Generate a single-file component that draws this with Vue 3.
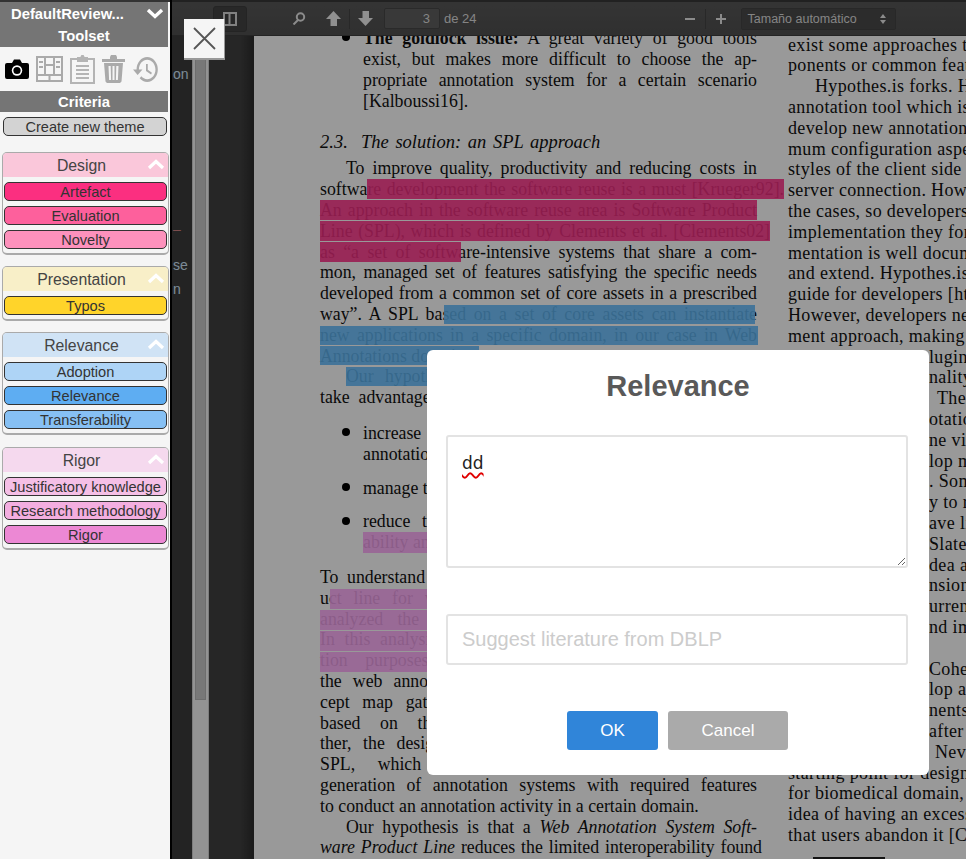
<script setup>
import { ref } from 'vue'

const comment = ref('dd')
const literature = ref('')

const groups = [
  {
    name: 'Design',
    head: '#fac7da',
    items: [
      { name: 'Artefact', color: '#fb2f80' },
      { name: 'Evaluation', color: '#fd609c' },
      { name: 'Novelty', color: '#fd91bc' }
    ]
  },
  {
    name: 'Presentation',
    head: '#f8efc8',
    items: [{ name: 'Typos', color: '#ffd42a' }]
  },
  {
    name: 'Relevance',
    head: '#d0e3f5',
    items: [
      { name: 'Adoption', color: '#aed4f6' },
      { name: 'Relevance', color: '#5eadf2' },
      { name: 'Transferability', color: '#86c0f4' }
    ]
  },
  {
    name: 'Rigor',
    head: '#f5d9ee',
    items: [
      { name: 'Justificatory knowledge', color: '#f5bfe6' },
      { name: 'Research methodology', color: '#f3aee0' },
      { name: 'Rigor', color: '#ec88d4' }
    ]
  }
]

const crimson = 'rgba(255, 50, 136, 0.9)'
const blue = 'rgba(100, 190, 255, 0.9)'
const purple = 'rgba(255, 168, 250, 0.9)'

// annotations sit on top of the pdf text, coordinates relative to the page
const highlights = [
  { x: 113, y: 143, w: 417, h: 20, c: crimson },
  { x: 66, y: 164, w: 437, h: 20, c: crimson },
  { x: 66, y: 185, w: 450, h: 20, c: crimson },
  { x: 66, y: 206, w: 141, h: 20, c: crimson },
  { x: 190, y: 269, w: 311, h: 19, c: blue },
  { x: 66, y: 290, w: 438, h: 19, c: blue },
  { x: 66, y: 310, w: 159, h: 19, c: blue },
  { x: 92, y: 331, w: 100, h: 19, c: blue },
  { x: 109, y: 496, w: 80, h: 21, c: purple },
  { x: 76, y: 553, w: 120, h: 20, c: purple },
  { x: 66, y: 574, w: 130, h: 20, c: purple },
  { x: 66, y: 595, w: 130, h: 20, c: purple },
  { x: 66, y: 616, w: 130, h: 20, c: purple }
]

function rectStyle(h) {
  return {
    left: h.x + 'px',
    top: h.y + 'px',
    width: h.w + 'px',
    height: h.h + 'px',
    background: h.c
  }
}
</script>

<template>
  <div class="app">
    <aside class="sidebar">
      <div class="side-head">
        <div class="mode-row">
          <span class="mode-name">DefaultReview...</span>
          <svg class="chev" width="18" height="11" viewBox="0 0 18 11">
            <polyline points="2,2 9,8.5 16,2" fill="none" stroke="#fff" stroke-width="3.4" />
          </svg>
        </div>
        <div class="bar-title">Toolset</div>
      </div>
      <div class="tools">
        <svg width="24" height="20" viewBox="0 0 24 20">
          <path d="M2 4h5l2-3.5h6L17 4h5a2 2 0 0 1 2 2v12a2 2 0 0 1-2 2H2a2 2 0 0 1-2-2V6a2 2 0 0 1 2-2z" fill="#000" />
          <circle cx="12" cy="11.5" r="5.2" fill="#fff" />
          <circle cx="12" cy="11.5" r="3.6" fill="#000" />
        </svg>
        <svg width="27" height="26" viewBox="0 0 27 26" fill="none" stroke="#aaa" stroke-width="2">
          <rect x="1" y="1" width="25" height="24" />
          <path d="M1 19h25M9 1v18M18 1v18M13.5 19v6M9 9h9M3 6h4M3 11h4M20 6h4M20 11h4" />
        </svg>
        <svg width="25" height="29" viewBox="0 0 25 29" fill="none" stroke="#b4b4b4" stroke-width="2">
          <path d="M8 4H1v24h23V4h-7" />
          <path d="M8 6V3h3l1-2h1l1 2h3v3z" fill="#b4b4b4" />
          <path d="M6 11h13M6 15h13M6 19h13M6 23h13" />
        </svg>
        <svg width="23" height="28" viewBox="0 0 23 28" fill="#aaa">
          <path d="M0 4h8V2l1-2h5l1 2v2h8v3H0z" />
          <path d="M2 8h19l-1.500 18.500L18 28H5l-1.500-1.500zM6.500 11l.6 14h2l-.4-14zM10.500 11v14h2V11zM14.300 11l-.4 14h2l.6-14z" fill-rule="evenodd" />
        </svg>
        <svg class="history" width="26" height="25" viewBox="1 3 22 18" preserveAspectRatio="none" fill="#aaa">
          <path d="M13 3a9 9 0 0 0-9 9H1l3.890 3.890.070.140L9 12H6c0-3.870 3.130-7 7-7s7 3.130 7 7-3.130 7-7 7c-1.930 0-3.680-.790-4.940-2.060l-1.420 1.420A8.954 8.954 0 0 0 13 21a9 9 0 0 0 0-18zm-1 5v5l4.280 2.540.720-1.210-3.500-2.080V8H12z" />
        </svg>
      </div>
      <div class="bar-title criteria">Criteria</div>
      <button class="theme-btn new-theme">Create new theme</button>
      <section v-for="g in groups" :key="g.name" class="group">
        <header class="group-head" :style="{ background: g.head }">
          <span>{{ g.name }}</span>
          <svg class="group-chev" width="18" height="11" viewBox="0 0 18 11">
            <polyline points="2,9 9,2.500 16,9" fill="none" stroke="#fff" stroke-width="3.2" />
          </svg>
        </header>
        <button
          v-for="item in g.items"
          :key="item.name"
          class="theme-btn"
          :style="{ background: item.color }"
        >
          {{ item.name }}
        </button>
      </section>
    </aside>

    <div class="viewer">
      <div class="toolbar">
        <span class="tb-toggle">
          <svg width="14" height="14" viewBox="0 0 14 14" fill="none" stroke="#d8d8d8" stroke-width="2">
            <rect x="1" y="1" width="12" height="12" />
            <path d="M6.500 1v12" />
          </svg>
        </span>
        <svg class="tb-search" width="14" height="13" viewBox="0 0 14 13" fill="none" stroke="#e8e8e8" stroke-width="2">
          <circle cx="8.500" cy="5" r="3.700" />
          <path d="M6 8l-4.500 4.500" />
        </svg>
        <svg class="tb-up" width="15" height="15" viewBox="0 0 15 15" fill="#f0f0f0">
          <path d="M7.500 0L15 8h-4v7H4.500V8H0z" />
        </svg>
        <span class="tb-sep"></span>
        <svg class="tb-down" width="15" height="15" viewBox="0 0 15 15" fill="#f0f0f0">
          <path d="M7.500 15L15 7h-4V0H4.500v7H0z" />
        </svg>
        <span class="tb-page">3</span>
        <span class="tb-of">de 24</span>
        <span class="tb-minus"></span>
        <span class="tb-sep zoom-sep"></span>
        <span class="tb-plus"></span>
        <span class="tb-select">
          <span>Tamaño automático</span>
          <svg width="6" height="10" viewBox="0 0 6 10" fill="#e8e8e8">
            <path d="M3 0l3 4H0zM3 10l3-4H0z" />
          </svg>
        </span>
      </div>

      <div class="work">
        <div class="outline">
          <div class="frags">
            <div class="frag f1">on</div>
            <div class="frag f2">–</div>
            <div class="frag f3">se</div>
            <div class="frag f4">n</div>
          </div>
          <div class="track"><div class="thumb"></div></div>
          <div class="outline-rest"></div>
        </div>

        <div class="page">
          <div class="col left-col">
            <div class="bullet-block">
              <div class="ln"><b>The goldlock issue:</b> A great variety of good tools</div>
              <div class="ln">exist, but makes more difficult to choose the ap-</div>
              <div class="ln">propriate annotation system for a certain scenario</div>
              <div class="ln end">[Kalboussi16].</div>
            </div>
            <div class="ln end heading"><i>2.3.&nbsp; The solution: an SPL approach</i></div>
            <div class="ln indent">To improve quality, productivity and reducing costs in</div>
            <div class="ln w464">software development the software reuse is a must [Krueger92].</div>
            <div class="ln">An approach in the software reuse area is Software Product</div>
            <div class="ln w450">Line (SPL), which is defined by Clements et al. [Clements02]</div>
            <div class="ln">as “a set of software-intensive systems that share a com-</div>
            <div class="ln">mon, managed set of features satisfying the specific needs</div>
            <div class="ln">developed from a common set of core assets in a prescribed</div>
            <div class="ln">way”. A SPL based on a set of core assets can instantiate</div>
            <div class="ln">new applications in a specific domain, in our case in Web</div>
            <div class="ln end">Annotations domain.</div>
            <div class="ln indent">Our hypothesis is that a product line approach can</div>
            <div class="ln">take advantage of reuse for annotation tool development:</div>
            <div class="bullet-block list-first">
              <div class="ln">increase the productivity of the development of</div>
              <div class="ln">annotation tools</div>
            </div>
            <div class="bullet-block list-next">
              <div class="ln end">manage the variability of the domain</div>
            </div>
            <div class="bullet-block list-next">
              <div class="ln">reduce the time to market and improve the reli-</div>
              <div class="ln end">ability and quality of the products</div>
            </div>
            <div class="ln after-list">To understand the annotation domain as a software prod-</div>
            <div class="ln">uct line for web annotation tools, we have previously</div>
            <div class="ln">analyzed the state of the art of annotation systems.</div>
            <div class="ln">In this analysis, tools are reviewed for different annota-</div>
            <div class="ln">tion purposes. The result is a feature model for</div>
            <div class="ln">the web annotation domain, which is based on a con-</div>
            <div class="ln">cept map gathering the main features of the domain,</div>
            <div class="ln">based on the Web Annotation data model. Fur-</div>
            <div class="ln">ther, the design of the product line is presented as a</div>
            <div class="ln">SPL, which is able to support the automatic</div>
            <div class="ln">generation of annotation systems with required features</div>
            <div class="ln end">to conduct an annotation activity in a certain domain.</div>
            <div class="ln indent">Our hypothesis is that a <i>Web Annotation System Soft-</i></div>
            <div class="ln w442"><i>ware Product Line</i> reduces the limited interoperability found</div>
          </div>

          <div class="col right-col">
            <div class="rn">exist some approaches to reuse annotation tool com-</div>
            <div class="rn">ponents or common features of the client side.</div>
            <div class="rn ri">Hypothes.is forks. Hypothes.is is an open source</div>
            <div class="rn">annotation tool which is often forked in order to</div>
            <div class="rn">develop new annotation tools with a mini-</div>
            <div class="rn">mum configuration aspects such as the</div>
            <div class="rn">styles of the client side and the</div>
            <div class="rn">server connection. However, in most of</div>
            <div class="rn">the cases, so developers need to know its</div>
            <div class="rn">implementation they for the new tool. Docu-</div>
            <div class="rn">mentation is well documented and easy to</div>
            <div class="rn">and extend. Hypothes.is also has a</div>
            <div class="rn">guide for developers [https://h.is/dev].</div>
            <div class="rn">However, developers need a develop-</div>
            <div class="rn">ment approach, making reuse possible.</div>
            <div class="rn tail">lugin</div>
            <div class="rn tail">nality</div>
            <div class="rn tail the">The</div>
            <div class="rn tail">otation</div>
            <div class="rn tail">ne visual</div>
            <div class="rn tail">lop more</div>
            <div class="rn tail">. Some</div>
            <div class="rn tail">y to reuse</div>
            <div class="rn tail">ave limited</div>
            <div class="rn tail">Slate is</div>
            <div class="rn tail">dea and</div>
            <div class="rn tail">nsions</div>
            <div class="rn tail">urrent</div>
            <div class="rn tail">nd improve</div>
            <div class="rn">&nbsp;</div>
            <div class="rn tail">Cohen</div>
            <div class="rn tail">lop a</div>
            <div class="rn tail">nents</div>
            <div class="rn tail">after</div>
            <div class="rn tail neve">Nevertheless</div>
            <div class="rn">starting point for design of annotation</div>
            <div class="rn">for biomedical domain, where the main</div>
            <div class="rn">idea of having an excessive number of</div>
            <div class="rn">that users abandon it [Cohen18].</div>
            <div class="foot-rule"></div>
          </div>

          <div
            v-for="(h, i) in highlights"
            :key="i"
            class="hl"
            :style="rectStyle(h)"
          ></div>
          <span class="dot d1"></span>
          <span class="dot d2"></span>
          <span class="dot d3"></span>
          <span class="dot d4"></span>
        </div>
      </div>

      <div class="overlay"></div>
    </div>

    <button class="close-btn" aria-label="Close">
      <svg width="23" height="23" viewBox="0 0 23 23" stroke="#555" stroke-width="1.800">
        <path d="M1 1l21 21M22 1L1 22" />
      </svg>
    </button>

    <div class="modal">
      <h2 class="modal-title">Relevance</h2>
      <textarea v-model="comment" class="comment" spellcheck="false"></textarea>
      <input
        v-model="literature"
        class="literature"
        type="text"
        placeholder="Suggest literature from DBLP"
      />
      <div class="actions">
        <button class="ok">OK</button>
        <button class="cancel">Cancel</button>
      </div>
    </div>
  </div>
</template>

<style scoped>
.app {
  position: relative;
  display: flex;
  width: 966px;
  height: 859px;
  overflow: hidden;
  font-family: "Liberation Sans", Arial, sans-serif;
}

/* sidebar */
.sidebar {
  position: relative;
  z-index: 3;
  flex: none;
  box-sizing: border-box;
  width: 172px;
  height: 859px;
  padding-top: 2px;
  background: #f5f5f5;
  border-right: 2px solid #000;
  box-shadow: inset 0 2px 0 #333;
}
.side-head,
.bar-title {
  margin-right: 2px;
  background: #757575;
  color: #fff;
  font-weight: bold;
  font-size: 14.800px;
}
.side-head .bar-title {
  margin-right: 0;
}
.mode-row {
  display: flex;
  align-items: center;
  height: 23px;
  padding-left: 11px;
}
.mode-name {
  flex: 1;
  white-space: nowrap;
}
.chev {
  margin-right: 4px;
}
.bar-title {
  text-align: center;
  height: 22px;
  line-height: 22px;
}
.tools {
  display: flex;
  align-items: center;
  gap: 7px;
  height: 44px;
  padding-left: 5px;
}
.history {
  margin-left: 1px;
}
.criteria {
  height: 21px;
  line-height: 22px;
}
.theme-btn {
  display: block;
  box-sizing: border-box;
  width: 163px;
  height: 19px;
  margin: 5px 0 0 1px;
  padding: 1px 0 0;
  border: 1px solid #333;
  border-radius: 5px;
  background: #d3d3d3;
  color: #333;
  font: 14.600px/17px "Liberation Sans", Arial, sans-serif;
  text-align: center;
  white-space: nowrap;
}
.new-theme {
  width: 164px;
  margin: 5px 0 0 3px;
}
.group {
  box-sizing: border-box;
  width: 167px;
  margin: 11px 0 0 2px;
  padding-bottom: 4px;
  border: 1px solid #aaa;
  border-bottom-width: 2px;
  border-radius: 5px;
  overflow: hidden;
}
.group:first-of-type {
  margin-top: 16px;
}
.group:last-of-type {
  margin-top: 12px;
}
.group-head {
  position: relative;
  height: 24px;
  padding-right: 8px;
  color: #444;
  font-size: 15.800px;
  line-height: 26px;
  text-align: center;
}
.group-chev {
  position: absolute;
  right: 3px;
  top: 6px;
}

/* pdf viewer */
.viewer {
  position: relative;
  flex: 1;
  min-width: 0;
  height: 859px;
  display: flex;
  flex-direction: column;
}
.toolbar {
  position: relative;
  z-index: 1;
  flex: none;
  display: flex;
  align-items: center;
  box-sizing: border-box;
  height: 36px;
  padding: 0 0 0 41px;
  background: linear-gradient(#585858, #505050);
  border-top: 2px solid #383838;
  border-bottom: 1px solid #3c3c3c;
  color: #ddd;
  font-size: 13px;
}
.tb-toggle {
  display: flex;
  align-items: center;
  justify-content: center;
  box-sizing: border-box;
  width: 34px;
  height: 26px;
  background: #444;
  border-radius: 3px;
  border: 1px solid #3c3c3c;
}
.tb-search {
  margin-left: 45px;
}
.tb-up {
  margin-left: 20px;
}
.tb-sep {
  width: 1px;
  height: 20px;
  margin: 0 8px;
  background: #444;
}
.tb-page {
  box-sizing: border-box;
  width: 56px;
  height: 21px;
  margin-left: 11px;
  padding-right: 9px;
  background: #5f5f5f;
  border: 1px solid #474747;
  border-radius: 2px;
  line-height: 19px;
  text-align: right;
}
.tb-of {
  margin-left: 4px;
}
.tb-minus {
  width: 10px;
  height: 2px;
  margin-left: 208px;
  background: #e8e8e8;
}
.zoom-sep {
  margin: 0 10px;
}
.tb-plus {
  position: relative;
  width: 10px;
  height: 2px;
  background: #e8e8e8;
}
.tb-plus::after {
  content: "";
  position: absolute;
  left: 4px;
  top: -4px;
  width: 2px;
  height: 10px;
  background: #e8e8e8;
}
.tb-select {
  display: flex;
  align-items: center;
  justify-content: space-between;
  box-sizing: border-box;
  width: 155px;
  height: 22px;
  margin-left: 15px;
  padding: 0 9px 0 6px;
  background: #4a4a4a;
  border: 1px solid #444;
  border-radius: 2px;
  font-size: 12.500px;
}

.work {
  flex: 1;
  display: flex;
  min-height: 0;
  overflow: hidden;
}
.outline {
  flex: none;
  display: flex;
  width: 82px;
  background: #3b3b3b;
}
.frags {
  flex: none;
  width: 20px;
  overflow: hidden;
  color: #d0e6fa;
  font-size: 14px;
  line-height: 16px;
}
.frag {
  padding-left: 1px;
}
.f1 { margin-top: 30px; }
.f2 { margin-top: 139px; color: #d08080; }
.f3 { margin-top: 20px; }
.f4 { margin-top: 8px; }
.track {
  flex: none;
  box-sizing: border-box;
  width: 17px;
  height: 823px;
  padding: 0 2px;
  background: #f5f5f5;
  border: solid #d0d0d0;
  border-width: 0 1px;
}
.thumb {
  height: 664px;
  background: #c8c8c8;
  border: 1px solid #b8b8b8;
  box-sizing: border-box;
}
.outline-rest {
  flex: 1;
  background: linear-gradient(90deg, #404040 70%, #2c2c2c);
}
.page {
  position: relative;
  flex: 1;
  display: flex;
  min-width: 0;
  padding-left: 66px;
  background: #fff;
  color: #111;
  font: 17.800px/20.800px "Liberation Serif", "Times New Roman", serif;
  overflow: hidden;
}
.col {
  flex: none;
  width: 437px;
}
.left-col {
  margin-top: -7.600px;
}
.right-col {
  margin: -1.400px 0 0 31px;
  width: 460px;
  font-size: 18px;
  letter-spacing: 0.350px;
}
.ln {
  width: 437px;
  white-space: nowrap;
  text-align: justify;
  text-align-last: justify;
}
.ln.end {
  text-align-last: left;
}
.ln.indent {
  box-sizing: border-box;
  padding-left: 26px;
}
.ln.w464 { width: 464px; }
.ln.w450 { width: 450px; }
.ln.w442 { width: 442px; }
.bullet-block .ln {
  box-sizing: border-box;
  width: 437px;
  padding-left: 43px;
}
.bullet-block {
  position: relative;
}
.heading {
  margin: 20px 0 6px;
  font-size: 18.500px;
  word-spacing: 2px;
}
.list-first {
  margin-top: 15px;
}
.list-next {
  margin-top: 13px;
}
.after-list {
  margin-top: 14px;
}
.rn {
  white-space: nowrap;
}
.rn.ri {
  padding-left: 27px;
}
.rn.tail {
  padding-left: 141px;
}
.rn.the {
  padding-left: 149px;
}
.rn.neve {
  padding-left: 147px;
}
.foot-rule {
  width: 72px;
  height: 2px;
  margin: 11px 0 0 25px;
  background: #222;
}
.hl {
  position: absolute;
}
.dot {
  position: absolute;
  left: 88px;
  width: 8px;
  height: 8px;
  border-radius: 50%;
  background: #000;
}
.d1 { top: -3px; }
.d2 { top: 392px; }
.d3 { top: 447px; }
.d4 { top: 481px; }

.overlay {
  position: absolute;
  inset: 0;
  z-index: 2;
  background: rgba(0, 0, 0, 0.4);
}
.close-btn {
  position: absolute;
  z-index: 4;
  left: 184px;
  top: 19px;
  display: flex;
  align-items: center;
  justify-content: center;
  box-sizing: border-box;
  width: 41px;
  height: 41px;
  padding: 0;
  background: #f5f5f5;
  border: none;
  border-right: 1px solid #999;
  border-bottom: 2px solid #999;
}

/* dialog */
.modal {
  position: absolute;
  z-index: 4;
  left: 427px;
  top: 350px;
  box-sizing: border-box;
  width: 502px;
  height: 425px;
  padding: 18px 19px 0;
  background: #fff;
  border-radius: 6px;
}
.modal-title {
  margin: 0;
  color: #595959;
  font-size: 29px;
  font-weight: bold;
  line-height: 36px;
  text-align: center;
}
.comment,
.literature {
  display: block;
  box-sizing: border-box;
  width: 462px;
  border: 2px solid #e3e3e3;
  border-radius: 3px;
  outline: none;
  color: #222;
}
.comment {
  height: 133px;
  margin-top: 31px;
  padding: 15px 14px;
  font: 17px/22px "DejaVu Sans", sans-serif;
  text-decoration: underline wavy #e00000 1.500px;
  text-underline-offset: 3px;
  resize: both;
}
.literature {
  height: 51px;
  margin-top: 46px;
  padding: 0 14px;
  font: 20px "Liberation Sans", Arial, sans-serif;
}
.literature::placeholder {
  color: #ccc;
  opacity: 1;
}
.actions {
  display: flex;
  justify-content: center;
  gap: 10px;
  margin-top: 46px;
  padding-right: 1px;
}
.actions button {
  box-sizing: border-box;
  height: 39px;
  padding: 0;
  border: none;
  border-radius: 3px;
  color: #fff;
  font: 17px "Liberation Sans", Arial, sans-serif;
}
.ok {
  width: 91px;
  background: #3085d9;
}
.cancel {
  width: 120px;
  background: #aaa;
}
</style>

<style>
html,
body {
  margin: 0;
  overflow: hidden;
  background: #222;
}
</style>
